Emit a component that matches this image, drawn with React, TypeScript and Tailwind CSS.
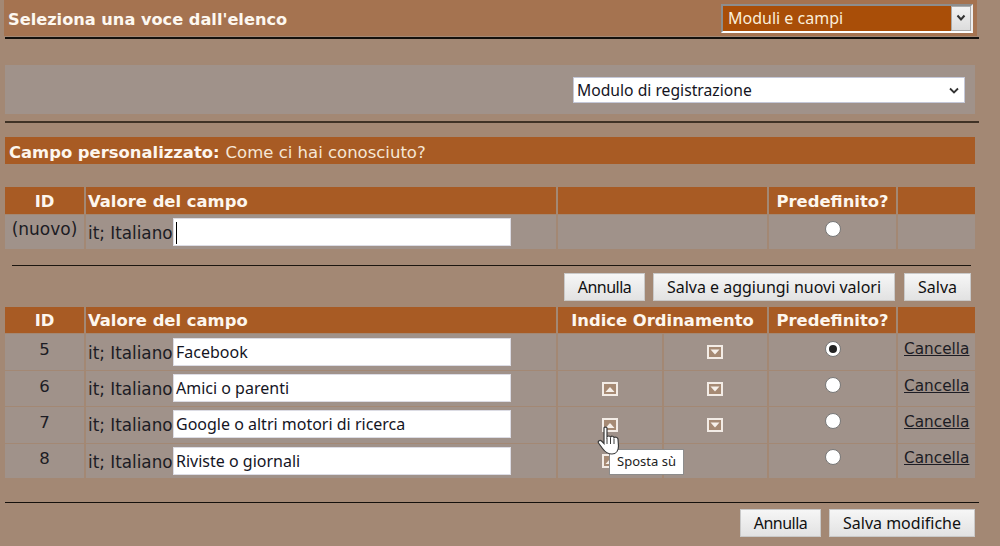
import React from 'react';

const gridCols = 'grid grid-cols-[79px_470px_104px_103px_127px_77px] gap-x-[2px] gap-y-[1px] ml-[5px] w-[970px]';
const head = 'bg-[#a85b24] text-[#fdf6ee] font-["DejaVu_Sans"] font-bold text-[16.4px] leading-none flex items-center';
const cell = 'bg-[#a0928a]';
const btn = 'h-[28px] bg-gradient-to-b from-[#f6f6f6] to-[#e2e2e2] border border-[#c9c9c9] text-[#111] font-["Noto_Sans"] text-[16px] flex items-center justify-center';

const rows = [
  { id: '5', value: 'Facebook', h: 'h-[36px]', up: false, down: true, checked: true, radio: 'pt-[7px]', text: 'pt-[3px]', field: 'pt-[4px]' },
  { id: '6', value: 'Amici o parenti', h: 'h-[35px]', up: true, down: true, checked: false, radio: 'pt-[6px]', text: 'pt-[3px]', field: 'pt-[3px]' },
  { id: '7', value: 'Google o altri motori di ricerca', h: 'h-[36px]', up: true, down: true, checked: false, radio: 'pt-[6px]', text: 'pt-[3px]', field: 'pt-[3px]' },
  { id: '8', value: 'Riviste o giornali', h: 'h-[34px]', up: true, down: false, checked: false, radio: 'pt-[5px]', text: 'pt-[2px]', field: 'pt-[3px]' },
];

const Arrow = ({ up }: { up?: boolean }) => (
  <svg width="16" height="14" viewBox="0 0 16 14">
    <rect x="1" y="1" width="14" height="12" fill="#a68a74" stroke="#f3ece6" strokeWidth="2" />
    {up ? <path d="M3.5 10 L8 5 L12.5 10 Z" fill="#f6f0ea" /> : <path d="M3.5 4.5 L12.5 4.5 L8 9.5 Z" fill="#f6f0ea" />}
  </svg>
);

const Radio = ({ checked }: { checked?: boolean }) => (
  <span className="w-[16px] h-[16px] rounded-full bg-white border border-[#777] flex items-center justify-center">
    {checked && <span className="w-[8px] h-[8px] rounded-full bg-[#222]" />}
  </span>
);

const ValueCell = ({ value, caret, field }: { value: string; caret?: boolean; field: string }) => (
  <div className={`${cell} ${field} pl-[2px] text-[#1c1c24]`}>
    <div className="flex items-center h-[28px]">
      <span className='w-[85px] pt-[3px] font-["DejaVu_Sans"] text-[16.8px] whitespace-nowrap'>it; Italiano</span>
      <div className="relative">
        <input
          readOnly
          value={value}
          className='block w-[338px] h-[28px] bg-white border border-[#dcdce4] pl-[2px] font-["Noto_Sans"] text-[16px] text-[#15151f] outline-none'
        />
        {caret && <span className="absolute left-[3px] top-[4px] w-[1px] h-[22px] bg-black" />}
      </div>
    </div>
  </div>
);

const Select = ({ value, dark }: { value: string; dark?: boolean }) =>
  dark ? (
    <div className="relative w-[252px] h-[29px] border-2 border-t-[#8d8d8d] border-l-[#8d8d8d] border-r-[#eee] border-b-white bg-[#a94e08]">
      <select className='w-full h-full appearance-none bg-transparent pl-[5px] text-[#fbeeda] font-["Noto_Sans"] text-[16px] outline-none'>
        <option>{value}</option>
      </select>
      <span className="absolute right-0 top-0 w-[20px] h-[25px] bg-gradient-to-b from-[#f2f2f2] to-[#dcdcdc] border border-[#aaa] flex items-center justify-center">
        <svg width="10" height="8" viewBox="0 0 10 8"><path d="M1.5 1.5 L5 5.5 L8.5 1.5" fill="none" stroke="#333" strokeWidth="2" /></svg>
      </span>
    </div>
  ) : (
    <div className="relative w-[392px] h-[26px] bg-white border border-[#c4c8d8]">
      <select className='w-full h-full appearance-none bg-transparent pl-[3px] text-[#14141e] font-["Noto_Sans"] text-[15.7px] outline-none'>
        <option>{value}</option>
      </select>
      <svg className="absolute right-[5px] top-[9px]" width="10" height="8" viewBox="0 0 10 8"><path d="M1 1.5 L5 5.5 L9 1.5" fill="none" stroke="#333" strokeWidth="1.8" /></svg>
    </div>
  );

export default function App() {
  return (
    <div className="relative w-[1000px] h-[546px] overflow-hidden bg-[#a38874] flex flex-col">
      <div className='ml-[4px] w-[973px] h-[36px] shrink-0 bg-[#a57350] flex items-center justify-between pl-[4px] pr-[4px]'>
        <span className='font-["DejaVu_Sans"] font-bold text-[16.2px] text-[#fdf8f0] pt-[4px]'>Seleziona una voce dall'elenco</span>
        <Select value="Moduli e campi" dark />
      </div>
      <div className="ml-[5px] w-[974px] h-[2px] mt-[1px] bg-[#14100c]" />

      <div className={`ml-[5px] w-[970px] h-[49px] mt-[26px] ${cell} flex items-center justify-end pr-[10px]`}>
        <Select value="Modulo di registrazione" />
      </div>
      <div className="ml-[5px] w-[974px] h-[2px] mt-[7px] bg-[#3f3226]" />

      <div className='ml-[5px] w-[970px] h-[27px] mt-[14px] bg-[#a85b24] flex items-center pl-[4px] pt-[5px] text-[#fdf6ee] text-[16.4px] leading-none font-["DejaVu_Sans"]'>
        <b>Campo personalizzato:</b><span className="ml-[6px] text-[16.5px] text-[#f6e7d6]">Come ci hai conosciuto?</span>
      </div>

      <div className={`${gridCols} mt-[23px]`}>
        <div className={`${head} h-[27px] justify-center pt-[4px]`}>ID</div>
        <div className={`${head} pl-[2px] pt-[4px]`}>Valore del campo</div>
        <div className={`${head} col-span-2`} />
        <div className={`${head} justify-center pt-[4px]`}>Predefinito?</div>
        <div className={head} />
        <div className={`${cell} h-[34px] text-center pt-[2px] font-["DejaVu_Sans"] text-[17px] text-[#1c1c24]`}>(nuovo)</div>
        <ValueCell value="" caret field="pt-[3px]" />
        <div className={`${cell} col-span-2`} />
        <div className={`${cell} flex justify-center pt-[6px]`}><Radio /></div>
        <div className={cell} />
      </div>

      <div className="ml-[12px] w-[959px] h-[1px] mt-[16px] bg-[#1c1610]" />

      <div className="flex justify-end gap-[8px] mt-[7px] w-[971px]">
        <div className={`${btn} w-[81px] tracking-[-0.5px]`}>Annulla</div>
        <div className={`${btn} w-[242px]`}>Salva e aggiungi nuovi valori</div>
        <div className={`${btn} w-[67px] ml-[1px]`}>Salva</div>
      </div>

      <div className={`${gridCols} mt-[6px]`}>
        <div className={`${head} h-[26px] justify-center pt-[3px]`}>ID</div>
        <div className={`${head} pl-[2px] pt-[3px]`}>Valore del campo</div>
        <div className={`${head} col-span-2 justify-center pt-[3px]`}>Indice Ordinamento</div>
        <div className={`${head} justify-center pt-[3px]`}>Predefinito?</div>
        <div className={head} />
        {rows.map((r) => (
          <React.Fragment key={r.id}>
            <div className={`${cell} ${r.h} text-center ${r.text} font-["DejaVu_Sans"] text-[16.5px] leading-[25px] text-[#1c1c24]`}>{r.id}</div>
            <ValueCell value={r.value} field={r.field} />
            <div className={`${cell} flex items-center justify-center`}>{r.up && <Arrow up />}</div>
            <div className={`${cell} flex items-center justify-center pr-[1px]`}>{r.down && <Arrow />}</div>
            <div className={`${cell} flex justify-center ${r.radio}`}><Radio checked={r.checked} /></div>
            <div className={`${cell} pl-[6px] ${r.text} font-["DejaVu_Sans"] text-[15.3px] leading-[25px] text-[#1c1c24] underline`}>Cancella</div>
          </React.Fragment>
        ))}
      </div>

      <div className="ml-[5px] w-[974px] h-[1px] mt-[24px] bg-[#14100c]" />

      <div className="flex justify-end gap-[8px] mt-[6px] w-[975px]">
        <div className={`${btn} w-[81px] tracking-[-0.5px]`}>Annulla</div>
        <div className={`${btn} w-[146px]`}>Salva modifiche</div>
      </div>

      <div className='absolute left-[609px] top-[449px] w-[75px] h-[26px] bg-white border border-[#8c8c8c] flex items-center justify-center font-["Noto_Sans"] text-[13px] text-[#222]'>Sposta sù</div>
      <svg className="absolute left-[597px] top-[426px]" width="23" height="29" viewBox="0 0 23 29">
        <path
          d="M7 2 C7 0.8 10 0.8 10 2 L10 11 C11 9.5 13 9.8 13.5 11 C14.5 9.8 16.5 10 17 11.5 C18 10.8 20.5 11 21 13 L21.5 20 C21.5 24 19.5 28 15 28 C10 28 8 26 5.5 22.5 L1.5 17 C0.5 15 3 13.5 4.5 15 L7 17.5 Z"
          fill="#fff"
          stroke="#3a3a3a"
          strokeWidth="1.2"
        />
        <path d="M10 12 V18 M13.5 12 V18 M17 12.5 V18" stroke="#3a3a3a" strokeWidth="1" fill="none" />
      </svg>
    </div>
  );
}
